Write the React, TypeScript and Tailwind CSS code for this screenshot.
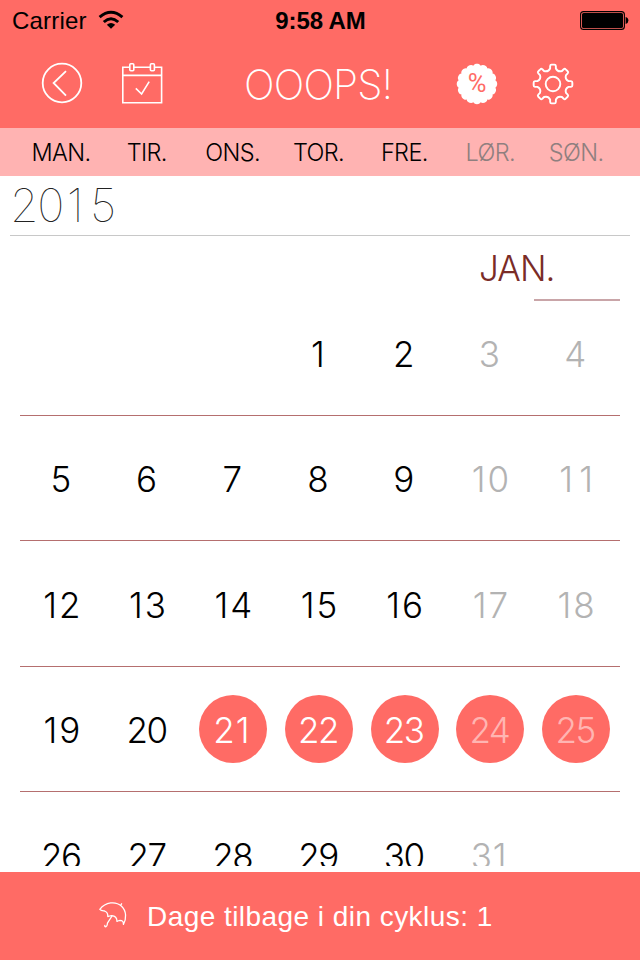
import React from "react";

const weekdays = ["MAN.", "TIR.", "ONS.", "TOR.", "FRE.", "LØR.", "SØN."];

const weeks: { days: (number | null)[]; height: string }[] = [
  { days: [null, null, null, 1, 2, 3, 4], height: "h-[126px]" },
  { days: [5, 6, 7, 8, 9, 10, 11], height: "h-[125px]" },
  { days: [12, 13, 14, 15, 16, 17, 18], height: "h-[126px]" },
  { days: [19, 20, 21, 22, 23, 24, 25], height: "h-[125px]" },
  { days: [26, 27, 28, 29, 30, 31, null], height: "h-[126px]" },
];

const marked = new Set([21, 22, 23, 24, 25]);

// Spreads the narrow "1" so that every two-digit day has a similar width.
function dayTracking(day: number) {
  if (day < 10) return "pr-[2px]";
  if (day === 11) return "tracking-[6px] pl-[6px]";
  if (day < 20) return "tracking-[2px] pl-[2px]";
  if (day % 10 === 1) return "tracking-[0.8px] pr-[3px]";
  return "tracking-[-1.5px] pr-[2px]";
}

function polar(r: number, deg: number) {
  const a = (deg * Math.PI) / 180;
  return `${(22 + r * Math.sin(a)).toFixed(2)} ${(22 - r * Math.cos(a)).toFixed(2)}`;
}

// Eight rounded teeth joined by concave valleys.
function gearPath() {
  let d = "";
  for (let i = 0; i < 8; i++) {
    const c = i * 45;
    d += `${i === 0 ? "M" : "L"}${polar(15.8, c - 10.5)}L${polar(18.2, c - 9)}Q${polar(19.6, c - 8)} ${polar(19.4, c - 4)}`;
    d += `L${polar(19.4, c + 4)}Q${polar(19.6, c + 8)} ${polar(18.2, c + 9)}L${polar(15.8, c + 10.5)}`;
    d += `Q${polar(12.6, c + 22.5)} ${polar(15.8, c + 34.5)}`;
  }
  return d + "Z";
}

// Round badge with a scalloped rim.
function sealPath() {
  const n = 16;
  const step = 360 / n;
  let d = `M${polar(18.7, -step / 2)}`;
  for (let i = 0; i < n; i++) {
    d += `C${polar(21, i * step - step * 0.28)} ${polar(21, i * step + step * 0.28)} ${polar(18.7, i * step + step / 2)}`;
  }
  return d + "Z";
}

function BackIcon() {
  return (
    <svg width="44" height="44" viewBox="0 0 44 44" fill="none" stroke="#fff" strokeWidth="1.8">
      <circle cx="22" cy="21" r="19.3" />
      <path d="M26 9.2L13.6 21L26 33.6" />
    </svg>
  );
}

function CalendarIcon() {
  return (
    <svg width="44" height="44" viewBox="0 0 44 44" fill="none" stroke="#fff" strokeWidth="1.6">
      <path d="M9.8 5.2H2.8V40.8H41.6V5.2H34.4M30.4 5.2H13.8M2.8 13.4H41.6" />
      <rect x="9.8" y="1.8" width="4" height="7" rx="1" />
      <rect x="30.4" y="1.8" width="4" height="7" rx="1" />
      <path d="M15.8 26.4L21.6 32L29.2 19.6" />
    </svg>
  );
}

function GearIcon() {
  return (
    <svg width="44" height="44" viewBox="0 0 44 44" fill="none" stroke="#fff" strokeWidth="1.9" strokeLinejoin="round">
      <path d={gearPath()} />
      <circle cx="22" cy="22" r="7.3" />
    </svg>
  );
}

function SealIcon() {
  return (
    <div className="grid h-11 w-11 place-items-center">
      <svg className="col-start-1 row-start-1" width="44" height="44" viewBox="0 0 44 44" fill="#fff">
        <path d={sealPath()} />
      </svg>
      <span className="col-start-1 row-start-1 font-['Roboto',sans-serif] text-[25.5px] leading-none text-[#ff6b65]">%</span>
    </div>
  );
}

function UmbrellaIcon() {
  return (
    <svg width="30" height="30" viewBox="0 0 30 30" fill="none" stroke="#fff" strokeWidth="1.3" strokeLinecap="round" strokeLinejoin="round">
      <path d="M1.8 8.4C7.6 .8 17.6 -.2 23.6 5.2C28.6 10 28.6 17.6 25.4 23.4C25.6 20.8 24.4 19.4 22 19.4C20.8 19.6 19.8 20 19 20.4C19 17.2 17 14.8 13.6 14.6C12 14.8 10.8 15.2 9.8 15.6C10 12.4 8.8 10.8 6.6 10C5.2 9.8 3.2 10 1.8 8.4Z" />
      <path d="M22.8 4L23.6 2.8M14 15L9.6 21.8C9 23.2 9.8 25.2 7.8 25.8C6.8 25.8 6.6 25 6.8 24.4" />
    </svg>
  );
}

function StatusBar() {
  return (
    <div className="grid h-10 grid-cols-3 items-center pr-[11px] pl-3 font-['Liberation_Sans',sans-serif] text-[24px] leading-none text-black">
      <div className="flex items-center gap-[11px]">
        <span className="pt-[2px] tracking-[0.2px]">Carrier</span>
        <svg width="26" height="20" viewBox="0 0 26 20" fill="none" stroke="#000" strokeWidth="3">
          <path d="M1.6 7.2Q13 -2.6 24.4 7.2" />
          <path d="M5.8 12Q13 5.6 20.2 12" />
          <path d="M13 18.8L8.8 14.8Q13 11.4 17.2 14.8Z" fill="#000" stroke="none" />
        </svg>
      </div>
      <span className="pt-[2px] text-center font-bold tracking-[-0.1px]">9:58 AM</span>
      <svg className="ml-auto" width="50" height="20" viewBox="0 0 50 20">
        <rect x="1.6" y="1.6" width="43.8" height="17.8" rx="3" fill="none" stroke="#000" strokeWidth="1.1" />
        <rect x="3" y="3" width="41" height="15" rx="1.6" />
        <path d="M46.6 7Q49.4 7.8 49.4 10.5T46.6 14Z" />
      </svg>
    </div>
  );
}

export default function App() {
  return (
    <div className="flex h-[960px] w-[640px] flex-col overflow-hidden bg-white font-['Inter',sans-serif]">
      <header className="bg-[#ff6b65] text-white">
        <StatusBar />
        <div className="flex h-[88px] items-center pl-10">
          <BackIcon />
          <div className="w-9" />
          <CalendarIcon />
          <h1 className="w-[291px] whitespace-nowrap pt-px pl-[80px] text-[40.5px] leading-[44px] font-[200] tracking-[-0.8px]">OOOPS!</h1>
          <SealIcon />
          <div className="w-8" />
          <GearIcon />
        </div>
      </header>
      <div className="grid h-12 grid-cols-7 items-center bg-[#ffb3b2] pt-[2px] pr-[21px] pl-[18px]">
        {weekdays.map((d, i) => (
          <span key={d} className={`text-center text-[23.5px] font-light tracking-[-0.6px] ${i > 4 ? "text-[#8f7f7f]" : "text-black"}`}>
            {d}
          </span>
        ))}
      </div>
      <main className="h-[690px] overflow-hidden">
        <div className="mx-[10px] h-[60px] border-b border-[#c8c8c8]">
          <h2 className="text-[46px] leading-[59px] font-[100] tracking-[-1.4px] text-[#222]">
            2<span className="tracking-[2.5px]">0</span><span className="tracking-[6.5px]">1</span>5
          </h2>
        </div>
        <div className="flex h-[64px] flex-col items-end pr-5">
          <div className="h-[63px] w-[141px] text-[35px] leading-[65px] font-light tracking-[-0.9px] text-[#7a2c27]">JAN.</div>
          <div className="h-[2px] w-[86px] shrink-0 bg-[#c9a5a8]" />
        </div>
        <div className="-mt-[10px]">
          {weeks.map((week, w) => (
            <div key={w} className={`mx-5 border-b border-[#b56f6f] ${week.height}`}>
              <div className="-ml-px grid h-full w-[600px] grid-cols-7 items-center justify-items-center">
                {week.days.map((day, i) => {
                  if (day === null) return <span key={i} />;
                  const on = marked.has(day);
                  const color = on ? (i > 4 ? "bg-[#ff6b65] text-[#ffb5b2]" : "bg-[#ff6b65] text-white") : i > 4 ? "text-[#b3b3b3]" : "text-black";
                  return (
                    <span key={i} className={`flex h-[68px] w-[68px] items-center justify-center rounded-full pt-[3px] text-[35px] leading-none font-light ${dayTracking(day)} ${color}`}>
                      {day}
                    </span>
                  );
                })}
              </div>
            </div>
          ))}
        </div>
      </main>
      <div className="h-[6px]" />
      <footer className="flex h-[88px] items-center bg-[#ff6b65] pl-[98px] text-white">
        <UmbrellaIcon />
        <span className="ml-[19px] whitespace-nowrap pt-[2px] font-['Liberation_Sans',sans-serif] text-[28px] tracking-[0.45px]">Dage tilbage i din cyklus: 1</span>
      </footer>
    </div>
  );
}
